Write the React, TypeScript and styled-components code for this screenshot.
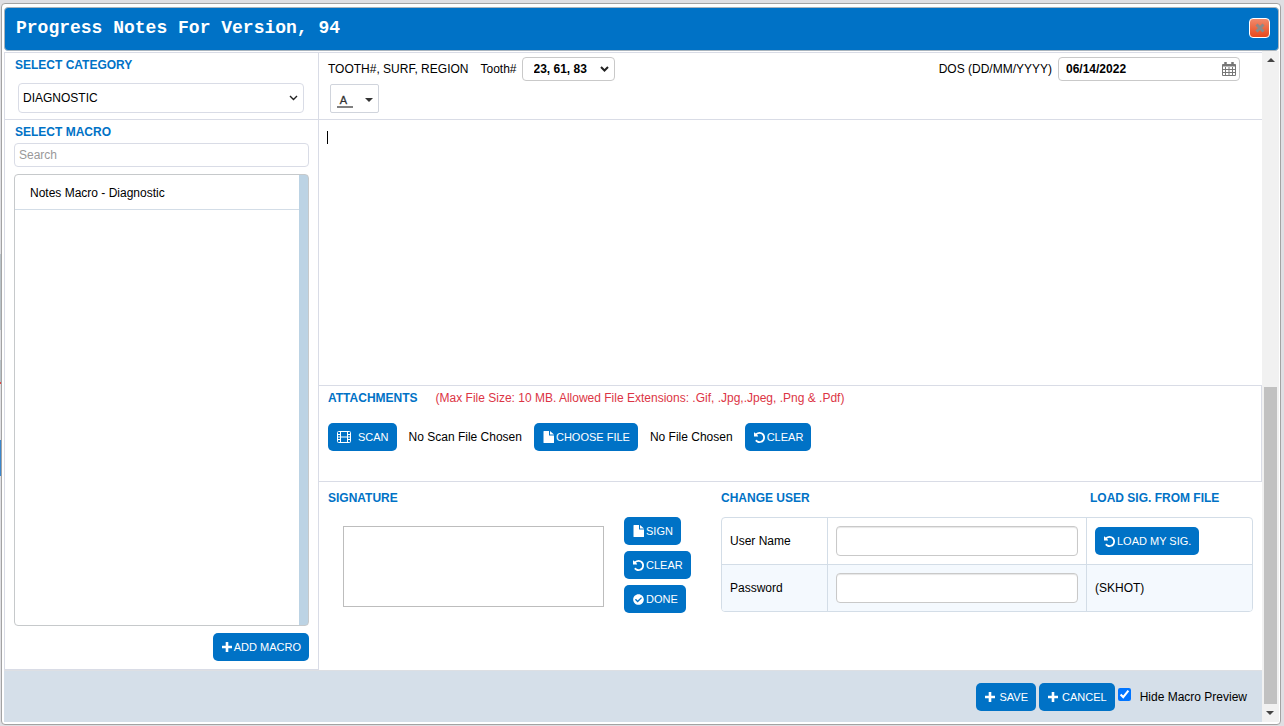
import React, { useState } from "react";
import styled, { createGlobalStyle } from "styled-components";
import { FaCheckCircle } from "react-icons/fa";

const BLUE = "#0072c6";
const LINE = "#d9dce6";
const TABLE_LINE = "#d3dde7";

const Global = createGlobalStyle`
  *, *::before, *::after { box-sizing: border-box; }
  body {
    margin: 0;
    background: #dfdfe3;
    color: #000;
    font: 12px/16px "Liberation Sans", Arial, sans-serif;
  }
  button, input, select, textarea { font: inherit; color: inherit; margin: 0; }
`;

const Page = styled.div`
  height: 100vh;
  min-height: 600px;
  padding: 3px 3px 1px 1px;
  background: linear-gradient(
    #dfdfe3 254px, #b9c2c8 254px, #b9c2c8 330px, #dfdfe3 330px, #dfdfe3 360px,
    #b9c2c8 360px, #b9c2c8 382px, #e04848 382px, #e04848 384px, #dfdfe3 384px,
    #dfdfe3 440px, #3b86cc 440px, #3b86cc 476px, #dfdfe3 476px
  ) 0 0 / 1px 100% no-repeat;
`;

const Dialog = styled.section`
  display: flex;
  flex-direction: column;
  height: 100%;
  padding: 3px 1px 2px 2px;
  background: #fff;
  border: 1px solid #a3a3a3;
  border-radius: 4px;
`;

const TitleBar = styled.header`
  display: flex;
  align-items: center;
  justify-content: space-between;
  flex: none;
  height: 44px;
  padding: 0 8px 2px 11px;
  background: ${BLUE};
  border: 1px solid #a9b4bd;
  border-radius: 4px;
`;

const Title = styled.h1`
  margin: 0;
  color: #fff;
  font: bold 18px/20px "Liberation Mono", "Courier New", monospace;
`;

const CloseButton = styled.button`
  display: flex;
  align-items: center;
  justify-content: center;
  width: 21px;
  height: 20px;
  padding: 0;
  background: linear-gradient(#f08a6c, #e8481c);
  border: 1px solid #fff;
  border-radius: 4px;
`;

const Body = styled.div`
  display: flex;
  flex: 1;
  min-height: 0;
`;

const Content = styled.div`
  display: flex;
  flex-direction: column;
  flex: 1;
  min-width: 0;
  padding-top: 1px;
`;

const Columns = styled.div`
  display: flex;
  flex: 1;
  min-height: 0;
  border-top: 1px solid ${LINE};
`;

const Sidebar = styled.aside`
  display: flex;
  flex-direction: column;
  flex: none;
  width: 315px;
  border: solid ${LINE};
  border-width: 0 1px 1px;
`;

const Heading = styled.h2`
  margin: 0;
  color: ${BLUE};
  font-size: 12px;
  line-height: 16px;
  font-weight: bold;
`;

const CategoryBlock = styled.div`
  height: 67px;
  padding: 4px 14px 0 10px;
  border-bottom: 1px solid ${LINE};
`;

const SelectWrap = styled.div`
  position: relative;
  display: flex;
  align-items: center;
`;

const SelectArrow = styled.svg`
  position: absolute;
  right: 6px;
  pointer-events: none;
  fill: none;
  stroke: #222;
`;

const CategorySelect = styled.select`
  appearance: none;
  width: 100%;
  height: 30px;
  padding: 0 4px;
  background: #fff;
  border: 1px solid ${LINE};
  border-radius: 4px;
`;

const CategoryRow = styled(SelectWrap)`
  margin: 10px 0 0 3px;
`;

const MacroBlock = styled.div`
  display: flex;
  flex-direction: column;
  flex: 1;
  min-height: 0;
  padding: 4px 9px 8px 9px;
`;

const MacroHeading = styled(Heading)`
  padding-left: 1px;
`;

const SearchInput = styled.input`
  height: 24px;
  margin-top: 3px;
  padding: 0 4px;
  border: 1px solid ${LINE};
  border-radius: 4px;
  &::placeholder { color: #999; opacity: 1; }
`;

const MacroList = styled.ul`
  flex: 1;
  margin: 7px 0;
  padding: 0;
  list-style: none;
  background: linear-gradient(to left, #bcd3e4 9px, #fff 9px);
  border: 1px solid #c6c9cb;
  border-radius: 4px;
`;

const MacroItem = styled.li`
  height: 35px;
  margin-right: 9px;
  padding: 0 15px;
  line-height: 36px;
  border-bottom: 1px solid ${TABLE_LINE};
`;

const Button = styled.button<{ $gap?: number }>`
  display: inline-flex;
  align-items: center;
  gap: ${(p) => p.$gap ?? 2}px;
  flex: none;
  height: 28px;
  padding: 0 8px 0 9px;
  color: #fff;
  font-size: 11px;
  line-height: 16px;
  font-weight: 500;
  white-space: nowrap;
  background: ${BLUE};
  border: 0;
  border-radius: 5px;
  svg { flex: none; }
`;

const AddButton = styled(Button)`
  align-self: flex-end;
`;

const Main = styled.main`
  display: flex;
  flex-direction: column;
  flex: 1;
  min-width: 0;
`;

const Toolbar = styled.div`
  height: 67px;
  padding: 4px 22px 0 9px;
  border-bottom: 1px solid ${LINE};
`;

const ToolbarRow = styled.div`
  display: flex;
  align-items: center;
`;

const ToothLabel = styled.label`
  margin: 0 5px 0 12px;
`;

const ToothSelect = styled.select`
  appearance: none;
  width: 93px;
  height: 24px;
  padding: 0 11px;
  font-weight: bold;
  background: #fff;
  border: 1px solid #c9c9c9;
  border-radius: 4px;
`;

const DateLabel = styled.label`
  margin: 0 6px 0 auto;
`;

const DateBox = styled.div`
  position: relative;
  width: 182px;
  height: 24px;
`;

const DateInput = styled.input`
  width: 100%;
  height: 100%;
  padding: 0 7px;
  font-weight: bold;
  border: 1px solid #c9c9c9;
  border-radius: 4px;
`;

const CalendarIcon = styled.svg`
  position: absolute;
  right: 4px;
  top: 5px;
  fill: none;
  stroke: #777;
`;

const ColorButton = styled.button`
  display: flex;
  align-items: center;
  justify-content: space-between;
  width: 49px;
  height: 29px;
  margin: 3px 0 0 2px;
  padding: 2px 5px 0 6px;
  background: #fff;
  border: 1px solid #d0d4dc;
  border-radius: 2px;
`;

const ColorLetter = styled.span`
  width: 16px;
  padding: 2px 3px 0 0;
  color: #333;
  font-size: 11px;
  line-height: 12px;
  text-align: center;
  border-bottom: 2px solid #808080;
  -webkit-text-stroke: 0.3px #333;
`;

const EditorWrap = styled.div`
  position: relative;
  display: flex;
  flex: 1;
  min-height: 120px;
`;

const Editor = styled.textarea`
  width: 100%;
  padding: 9px 8px;
  border: 0;
  outline: 0;
  resize: none;
  background: #fff;
  caret-color: transparent;
`;

const Caret = styled.span`
  position: absolute;
  left: 8px;
  top: 11px;
  width: 1px;
  height: 13px;
  background: #000;
`;

const Attachments = styled.section`
  height: 97px;
  padding: 4px 9px 0;
  border: solid ${LINE};
  border-width: 1px 1px 1px 0;
`;

const HeadingRow = styled.div`
  display: flex;
  gap: 18px;
`;

const Limits = styled.span`
  color: #dc3545;
`;

const FileRow = styled.div`
  display: flex;
  align-items: center;
  gap: 12px;
  margin-top: 17px;
`;

const SignatureBlock = styled.section`
  display: grid;
  grid-template-columns: 296px 97px minmax(0, 1fr);
  height: 188px;
  padding: 8px 9px 0 9px;
`;

const SignaturePad = styled.div`
  width: 261px;
  height: 81px;
  margin: 20px 0 0 15px;
  border: 1px solid #bdbdbd;
`;

const ButtonStack = styled.div`
  display: flex;
  flex-direction: column;
  align-items: flex-start;
  gap: 6px;
  padding-top: 27px;
`;

const UserHeadings = styled.div`
  display: grid;
  grid-template-columns: minmax(0, 1fr) 163px;
`;

const TableFrame = styled.div`
  margin-top: 11px;
  border: 1px solid ${TABLE_LINE};
  border-radius: 4px;
  overflow: hidden;
`;

const UserTable = styled.table`
  width: 100%;
  table-layout: fixed;
  border-spacing: 0;
`;

const Cell = styled.td<{ $width?: number }>`
  width: ${(p) => (p.$width ? `${p.$width}px` : "auto")};
  height: 46px;
  padding: 0 8px;
  & + & { border-left: 1px solid ${TABLE_LINE}; }
`;

const Row = styled.tr`
  & + & { background: #f4f9fe; }
  & + & > td { height: 47px; border-top: 1px solid ${TABLE_LINE}; }
`;

const UserInput = styled.input`
  display: block;
  width: 100%;
  height: 30px;
  padding: 0 8px;
  background: #fff;
  border: 1px solid #c9c9c9;
  border-radius: 4px;
  box-shadow: inset 0 1px 1px #e6e6e6;
`;

const Footer = styled.footer`
  display: flex;
  align-items: center;
  justify-content: flex-end;
  gap: 3px;
  flex: none;
  height: 52px;
  padding-right: 15px;
  background: #d5dfe9;
  border-top: 1px solid #dddfe3;
`;

const PreviewLabel = styled.label`
  display: flex;
  align-items: center;
  gap: 9px;
`;

const PreviewCheck = styled.input`
  width: 13px;
  height: 13px;
  margin-bottom: 4px;
  accent-color: #0075ff;
`;

const ScrollTrack = styled.div`
  display: flex;
  flex-direction: column;
  align-items: center;
  flex: none;
  width: 17px;
  background: #f1f1f1;
`;

const ScrollButton = styled.button<{ $down?: boolean }>`
  display: flex;
  align-items: center;
  justify-content: center;
  width: 17px;
  height: 18px;
  padding: 0;
  background: none;
  border: 0;
  transform: ${(p) => (p.$down ? "rotate(180deg)" : "none")};
`;

const ScrollThumb = styled.div`
  width: 13px;
  height: 317px;
  margin-top: auto;
  background: #c1c1c1;
`;

const Triangle = () => (
  <svg width="8" height="4" viewBox="0 0 8 4" fill="#444" aria-hidden="true">
    <path d="M4 0 8 4H0z" />
  </svg>
);

const ScanIcon = () => (
  <svg width="14" height="12" viewBox="0 0 14 12" fill="none" stroke="#fff" aria-hidden="true">
    <rect x="0.5" y="0.5" width="13" height="11" rx="1" />
    <path d="M3.5 1v10M10.5 1v10M3.5 6h7M1 3.5h2M1 6h2M1 8.5h2M11 3.5h2M11 6h2M11 8.5h2" />
  </svg>
);

const PlusIcon = () => (
  <svg width="10" height="10" viewBox="0 0 10 10" aria-hidden="true">
    <path d="M5 0v10M0 5h10" stroke="#fff" strokeWidth="2.6" />
  </svg>
);

const UndoIcon = () => (
  <svg width="11" height="11" viewBox="0 128 1536 1536" fill="#fff" aria-hidden="true">
    <path d="M1536 896q0 156-61 298t-164 245-245 164-298 61q-172 0-327-72.5t-264-204.5q-7-10-6.5-22.5t8.5-20.5l137-138q10-9 25-9 16 2 23 12 73 95 179 147t225 52q104 0 198.5-40.5t163.5-109.5 109.5-163.5 40.5-198.5-40.5-198.5-109.5-163.5-163.5-109.5-198.5-40.5q-98 0-188 35.5t-160 101.5l137 138q31 30 14 69-17 40-59 40h-448q-26 0-45-19t-19-45v-448q0-42 40-59 39-17 69 14l130 129q107-101 244.5-156.5t284.5-55.5q156 0 298 61t245 164 164 245 61 298z" />
  </svg>
);

const FileIcon = () => (
  <svg width="11" height="12" viewBox="0 0 11 12" fill="#fff" aria-hidden="true">
    <path d="M1 0h5v4.5h5v7a.5.5 0 0 1-.5.5h-9.500a.5.5 0 0 1-.5-.5V.5A.5.5 0 0 1 1 0zM7 0l4 3.500H7z" />
  </svg>
);

export default function App() {
  const [date, setDate] = useState("06/14/2022");
  const [note, setNote] = useState("");
  const [hidePreview, setHidePreview] = useState(true);

  return (
    <>
      <Global />
      <Page>
        <Dialog aria-labelledby="dialog-title">
          <TitleBar>
            <Title id="dialog-title">Progress Notes For Version, 94</Title>
            <CloseButton aria-label="Close">
              <svg width="10" height="10" viewBox="0 0 10 10" aria-hidden="true">
                <path d="M1.500 1.500l7 7M8.500 1.500l-7 7" stroke="#8a8a8a" strokeWidth="3" />
              </svg>
            </CloseButton>
          </TitleBar>
          <Body>
            <Content>
              <Columns>
                <Sidebar>
                  <CategoryBlock>
                    <Heading>SELECT CATEGORY</Heading>
                    <CategoryRow>
                      <CategorySelect aria-label="Select category">
                        <option>DIAGNOSTIC</option>
                      </CategorySelect>
                      <SelectArrow width="9" height="6" viewBox="0 0 9 6" strokeWidth="1.4">
                        <path d="M1 1l3.5 3.5L8 1" />
                      </SelectArrow>
                    </CategoryRow>
                  </CategoryBlock>
                  <MacroBlock>
                    <MacroHeading>SELECT MACRO</MacroHeading>
                    <SearchInput aria-label="Search macros" placeholder="Search" />
                    <MacroList>
                      <MacroItem>Notes Macro - Diagnostic</MacroItem>
                    </MacroList>
                    <AddButton><PlusIcon />ADD MACRO</AddButton>
                  </MacroBlock>
                </Sidebar>
                <Main>
                  <Toolbar>
                    <ToolbarRow>
                      <span>TOOTH#, SURF, REGION</span>
                      <ToothLabel htmlFor="tooth">Tooth#</ToothLabel>
                      <SelectWrap>
                        <ToothSelect id="tooth">
                          <option>23, 61, 83</option>
                        </ToothSelect>
                        <SelectArrow width="9" height="6" viewBox="0 0 9 6" strokeWidth="2">
                          <path d="M1 1l3.5 3.5L8 1" />
                        </SelectArrow>
                      </SelectWrap>
                      <DateLabel htmlFor="dos">DOS (DD/MM/YYYY)</DateLabel>
                      <DateBox>
                        <DateInput id="dos" value={date} onChange={(e) => setDate(e.target.value)} />
                        <CalendarIcon width="14" height="14" viewBox="0 0 14 14">
                          <path d="M0.5 2.5h13v11h-13zM0.5 7.500h13M0.5 10.500h13M3.5 5v8M7 5v8M10.5 5v8" />
                          <path d="M0.5 3.500h13" strokeWidth="2" />
                          <path d="M3.5 0v3M10.5 0v3" strokeWidth="2.500" />
                        </CalendarIcon>
                      </DateBox>
                    </ToolbarRow>
                    <ColorButton aria-label="Text color">
                      <ColorLetter>A</ColorLetter>
                      <svg width="8" height="4" viewBox="0 0 8 4" fill="#333"><path d="M0 0h8L4 4z" /></svg>
                    </ColorButton>
                  </Toolbar>
                  <EditorWrap>
                    <Editor aria-label="Progress note" value={note} onChange={(e) => setNote(e.target.value)} />
                    {note === "" && <Caret />}
                  </EditorWrap>
                  <Attachments>
                    <HeadingRow>
                      <Heading>ATTACHMENTS</Heading>
                      <Limits>(Max File Size: 10 MB. Allowed File Extensions: .Gif, .Jpg,.Jpeg, .Png &amp; .Pdf)</Limits>
                    </HeadingRow>
                    <FileRow>
                      <Button $gap={7}><ScanIcon />SCAN</Button>
                      <span>No Scan File Chosen</span>
                      <Button><FileIcon />CHOOSE FILE</Button>
                      <span>No File Chosen</span>
                      <Button><UndoIcon />CLEAR</Button>
                    </FileRow>
                  </Attachments>
                  <SignatureBlock>
                    <div>
                      <Heading>SIGNATURE</Heading>
                      <SignaturePad />
                    </div>
                    <ButtonStack>
                      <Button><FileIcon />SIGN</Button>
                      <Button><UndoIcon />CLEAR</Button>
                      <Button><FaCheckCircle size={11} />DONE</Button>
                    </ButtonStack>
                    <div>
                      <UserHeadings>
                        <Heading>CHANGE USER</Heading>
                        <Heading>LOAD SIG. FROM FILE</Heading>
                      </UserHeadings>
                      <TableFrame>
                        <UserTable>
                          <tbody>
                            <Row>
                              <Cell $width={105}><label htmlFor="user">User Name</label></Cell>
                              <Cell><UserInput id="user" /></Cell>
                              <Cell $width={166}><Button><UndoIcon />LOAD MY SIG.</Button></Cell>
                            </Row>
                            <Row>
                              <Cell><label htmlFor="password">Password</label></Cell>
                              <Cell><UserInput id="password" type="password" /></Cell>
                              <Cell>(SKHOT)</Cell>
                            </Row>
                          </tbody>
                        </UserTable>
                      </TableFrame>
                    </div>
                  </SignatureBlock>
                </Main>
              </Columns>
              <Footer>
                <Button $gap={4}><PlusIcon />SAVE</Button>
                <Button $gap={4}><PlusIcon />CANCEL</Button>
                <PreviewLabel>
                  <PreviewCheck type="checkbox" checked={hidePreview} onChange={(e) => setHidePreview(e.target.checked)} />
                  Hide Macro Preview
                </PreviewLabel>
              </Footer>
            </Content>
            <ScrollTrack>
              <ScrollButton aria-label="Scroll up"><Triangle /></ScrollButton>
              <ScrollThumb />
              <ScrollButton $down aria-label="Scroll down"><Triangle /></ScrollButton>
            </ScrollTrack>
          </Body>
        </Dialog>
      </Page>
    </>
  );
}
